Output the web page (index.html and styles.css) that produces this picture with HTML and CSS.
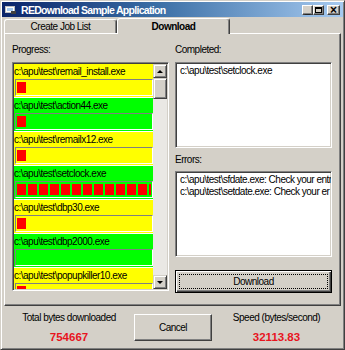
FILE: index.html
```html
<!doctype html>
<html>
  <head>
    <title>REDownload Sample Application</title>
    <link rel="stylesheet" href="styles.css">
  </head>
  <body>
    <div class="window">
      <div class="titlebar">
        <svg class="app-icon" width="12" height="10" viewBox="0 0 12 10">
          <rect x="0.5" y="1.5" width="9" height="6" fill="#fff" stroke="#c0c0c0" />
          <rect x="2" y="3" width="6" height="3" fill="#a6caf0" />
          <rect x="6" y="6" width="5" height="3" fill="#404040" />
        </svg>
        <span class="title">REDownload Sample Application</span>
        <div class="caption-btns">
          <span class="cap-btn">&#95;</span>
          <span class="cap-btn max"><span class="max-box"></span></span>
          <span class="cap-btn close">&#215;</span>
        </div>
      </div>

      <div class="tab-container">
        <div class="tab">Create Job List</div>
        <div class="tab active">Download</div>
      </div>

      <div class="panel">
        <div class="col">
          <div class="label">Progress:</div>
          <div class="listbox">
            <div class="items">
              <div class="item pending">
                <div class="item-name">c:\apu\test\remail_install.exe</div>
                <div class="bar"><div class="fill" style="width: 10px"></div></div>
              </div>
              <div class="item running">
                <div class="item-name">c:\apu\test\action44.exe</div>
                <div class="bar"><div class="fill" style="width: 10px"></div></div>
              </div>
              <div class="item pending">
                <div class="item-name">c:\apu\test\remailx12.exe</div>
                <div class="bar"><div class="fill" style="width: 10px"></div></div>
              </div>
              <div class="item running">
                <div class="item-name">c:\apu\test\setclock.exe</div>
                <div class="bar"><div class="fill" style="width: 100%"></div></div>
              </div>
              <div class="item pending">
                <div class="item-name">c:\apu\test\dbp30.exe</div>
                <div class="bar"><div class="fill" style="width: 10px"></div></div>
              </div>
              <div class="item running">
                <div class="item-name">c:\apu\test\dbp2000.exe</div>
                <div class="bar"><div class="fill" style="width: 0"></div></div>
              </div>
              <div class="item pending">
                <div class="item-name">c:\apu\test\popupkiller10.exe</div>
                <div class="bar"><div class="fill" style="width: 10px"></div></div>
              </div>
            </div>
            <div class="scrollbar">
              <div class="sb-btn"><span class="arrow-up"></span></div>
              <div class="sb-thumb"></div>
              <div class="sb-track"></div>
              <div class="sb-btn"><span class="arrow-down"></span></div>
            </div>
          </div>
        </div>

        <div class="col">
          <div class="label">Completed:</div>
          <div class="box">
            <div class="line">c:\apu\test\setclock.exe</div>
          </div>
          <div class="label errors-label">Errors:</div>
          <div class="box">
            <div class="line">c:\apu\test\sfdate.exe: Check your entri</div>
            <div class="line">c:\apu\test\setdate.exe: Check your er</div>
          </div>
          <button class="btn default-btn"><span class="focus">Download</span></button>
        </div>
      </div>

      <div class="footer">
        <div class="stat">
          <div class="stat-label">Total bytes downloaded</div>
          <div class="stat-value">754667</div>
        </div>
        <button class="btn cancel-btn">Cancel</button>
        <div class="stat">
          <div class="stat-label">Speed (bytes/second)</div>
          <div class="stat-value">32113.83</div>
        </div>
      </div>
    </div>
  </body>
</html>
```

FILE: styles.css
```css
* {
  box-sizing: border-box;
}
body {
  margin: 0;
  background-color: #d4d0c8;
  font-family: "Liberation Sans", Arial, sans-serif;
  font-size: 10px;
  letter-spacing: -0.5px;
  color: #000;
}
.window {
  width: 345px;
  height: 350px;
  padding: 1px;
  border: 1px solid;
  border-color: #d4d0c8 #404040 #404040 #d4d0c8;
  box-shadow: inset 1px 1px #fff, inset -1px -1px #808080;
  display: flex;
  flex-direction: column;
}
.titlebar {
  height: 15px;
  margin-bottom: 1px;
  padding: 0 3px 0 3px;
  display: flex;
  align-items: center;
  background: linear-gradient(90deg, #0a246a, #3a6ea5 45%, #a6caf0);
}
.app-icon {
  flex-shrink: 0;
}
.title {
  margin-left: 4px;
  color: #fff;
  font-weight: bold;
  font-size: 10.5px;
  letter-spacing: -0.7px;
  flex-grow: 1;
}
.caption-btns {
  display: flex;
}
.cap-btn {
  width: 11px;
  height: 10px;
  background-color: #d4d0c8;
  border: 1px solid;
  border-color: #fff #404040 #404040 #fff;
  box-shadow: inset -1px -1px #808080;
  display: flex;
  align-items: center;
  justify-content: center;
  font-size: 10px;
  font-weight: bold;
  line-height: 1;
  letter-spacing: 0;
}
.cap-btn.close {
  margin-left: 3px;
  width: 13px;
  font-size: 12px;
}
.max-box {
  width: 7px;
  height: 6px;
  border: 1px solid #000;
  border-top-width: 2px;
}
.tab-container {
  height: 15px;
  padding-left: 2px;
  display: flex;
  align-items: flex-end;
  position: relative;
  z-index: 1;
}
.tab {
  width: 113px;
  height: 14px;
  border: 1px solid;
  border-bottom: none;
  border-color: #fff #404040 #fff #fff;
  border-radius: 3px 3px 0 0;
  box-shadow: inset -1px 0 #808080;
  text-align: center;
  line-height: 13px;
}
.tab.active {
  height: 16px;
  margin-bottom: -1px;
  background-color: #d4d0c8;
  font-weight: bold;
  line-height: 15px;
}
.panel {
  height: 273px;
  margin: 0 2px;
  padding: 9px 7px 0 7px;
  border: 1px solid;
  border-color: #fff #404040 #404040 #fff;
  box-shadow: inset -1px -1px #808080;
  display: flex;
  gap: 6px;
}
.col {
  display: flex;
  flex-direction: column;
  width: 157px;
}
.label {
  height: 14px;
  margin-bottom: 5px;
  line-height: 14px;
}
.errors-label {
  margin-top: 5px;
  height: 13px;
  margin-bottom: 5px;
}
.listbox {
  height: 229px;
  border: 1px solid;
  border-color: #808080 #fff #fff #808080;
  box-shadow: inset 1px 1px #404040, inset -1px -1px #d4d0c8;
  padding: 1px;
  background-color: #fff;
  display: flex;
}
.items {
  flex-grow: 1;
  overflow: hidden;
}
.item {
  height: 34px;
  padding-bottom: 1px;
  border-bottom: 1px solid #fff;
}
.item.pending {
  background-color: #ffff00;
}
.item.running {
  background-color: #00ff00;
}
.item-name {
  height: 15px;
  line-height: 15px;
  white-space: nowrap;
}
.bar {
  height: 17px;
  margin-left: 1px;
  padding: 2px 1px;
  border: 1px solid;
  border-color: #808080 #fff #fff #808080;
}
.fill {
  height: 100%;
  max-width: 100%;
  background: repeating-linear-gradient(90deg, #ff0000 0 9px, transparent 9px 11px);
}
.scrollbar {
  width: 14px;
  flex-shrink: 0;
  display: flex;
  flex-direction: column;
}
.sb-btn,
.sb-thumb {
  height: 14px;
  background-color: #d4d0c8;
  border: 1px solid;
  border-color: #d4d0c8 #404040 #404040 #d4d0c8;
  box-shadow: inset 1px 1px #fff, inset -1px -1px #808080;
  display: flex;
  align-items: center;
  justify-content: center;
}
.sb-thumb {
  height: 21px;
}
.sb-track {
  flex-grow: 1;
  background-color: #eae8e4;
}
.arrow-up,
.arrow-down {
  width: 0;
  height: 0;
  border-left: 3px solid transparent;
  border-right: 3px solid transparent;
}
.arrow-up {
  border-bottom: 3px solid #000;
}
.arrow-down {
  border-top: 3px solid #000;
}
.box {
  height: 86px;
  border: 1px solid;
  border-color: #808080 #fff #fff #808080;
  box-shadow: inset 1px 1px #404040, inset -1px -1px #d4d0c8;
  padding: 2px 4px;
  background-color: #fff;
  overflow: hidden;
}
.line {
  white-space: nowrap;
  line-height: 12px;
}
.btn {
  font-family: inherit;
  font-size: 10px;
  letter-spacing: -0.5px;
  color: #000;
  background-color: #d4d0c8;
  border: 1px solid;
  border-color: #fff #404040 #404040 #fff;
  box-shadow: inset -1px -1px #808080;
  padding: 0;
}
.default-btn {
  margin-top: 13px;
  height: 23px;
  border: 1px solid #000;
  box-shadow: inset 1px 1px #fff, inset -1px -1px #404040, inset -2px -2px #808080;
  padding: 3px;
  display: flex;
}
.focus {
  flex-grow: 1;
  border: 1px dotted #000;
  display: flex;
  align-items: center;
  justify-content: center;
}
.footer {
  flex-grow: 1;
  margin: 0 2px;
  display: grid;
  grid-template-columns: 130px 78px 1fr;
}
.stat {
  text-align: center;
  padding-top: 6px;
}
.stat-label {
  line-height: 12px;
}
.stat-value {
  margin-top: 7px;
  color: #e8141e;
  font-weight: bold;
  font-size: 11.5px;
  letter-spacing: 0;
  line-height: 12px;
}
.cancel-btn {
  margin-top: 8px;
  height: 27px;
}
```
